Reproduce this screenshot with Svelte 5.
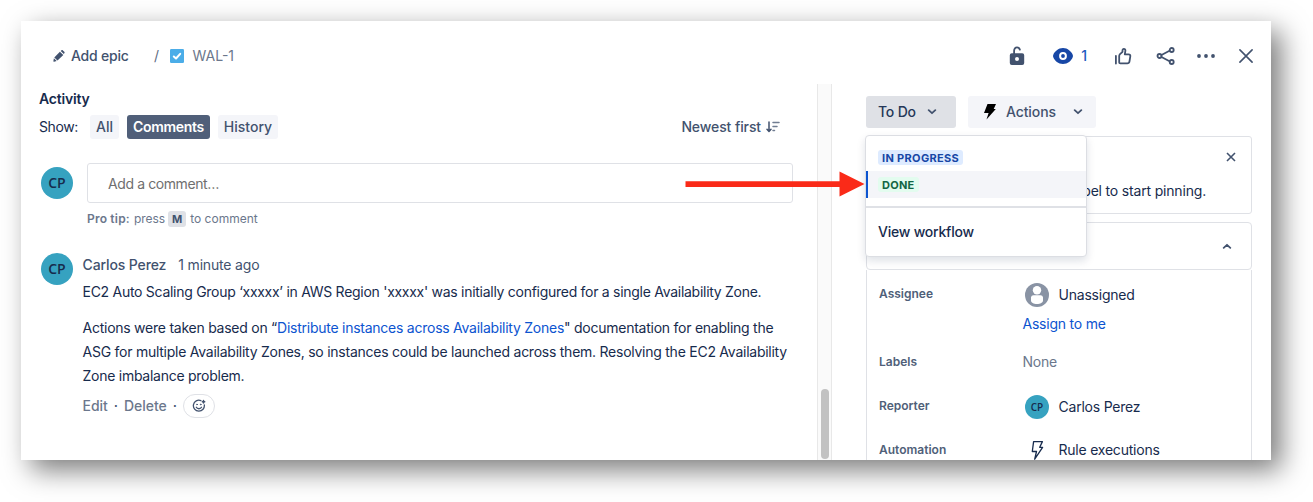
<script>
  const filters = [
    { label: 'All', active: false },
    { label: 'Comments', active: true },
    { label: 'History', active: false }
  ];
</script>

{#snippet chevron(up)}
  <svg class="chev" class:up width="10" height="6" viewBox="0 0 10 6"><path d="M1.7 1.2 5 4.2 8.3 1.2" /></svg>
{/snippet}

<div class="stage">
  <main class="card">
    <header>
      <svg class="pencil" width="12" height="12" viewBox="0 0 12 12"><path d="M6.900 1.700 10.300 5 4.500 10.500 1.300 7.400ZM7.700.9l.8-.6c.5-.4 1-.3 1.400.1l1.400 1.300c.4.4.4 1 0 1.500l-.5.9ZM.9 8.200l2.800 2.700-2.600.8c-.5.1-.9-.2-.7-.7Z" /></svg>
      <span class="epic">Add epic</span>
      <span class="slash">/</span>
      <svg class="task" width="14" height="14" viewBox="0 0 14 14"><rect width="14" height="14" rx="1.200" fill="#4bade8" /><path d="M3.8 7.5 6 9.5 10.2 4.8" fill="none" stroke="#fff" stroke-width="2" stroke-linecap="round" stroke-linejoin="round" /></svg>
      <span class="key">WAL-1</span>
      <nav>
        <svg width="24" height="24" viewBox="0 0 24 24"><path d="M9.1 12V6.8C9.1 4.900 10.300 3.300 12 3.300c1.400 0 2.500.9 2.900 2.400" fill="none" stroke="#42526e" stroke-width="1.800" stroke-linecap="round" /><path fill="#42526e" fill-rule="evenodd" d="M6.8 9.2h10.4a2 2 0 0 1 2 2V19a2 2 0 0 1-2 2H6.8a2 2 0 0 1-2-2v-7.8a2 2 0 0 1 2-2ZM12 13.1a2 2 0 1 0 0 4 2 2 0 0 0 0-4Z" /></svg>
        <span class="watch">
          <svg width="20" height="16" viewBox="0 0 20 16"><path fill="#1747a6" d="M10 0C5.2 0 1.7 3.500.4 6.500Q-.3 8 .4 9.500C1.700 12.500 5.200 16 10 16s8.300-3.500 9.600-6.500q.7-1.500 0-3C18.300 3.500 14.800 0 10 0Z" /><circle cx="10" cy="8" r="2.9" fill="none" stroke="#fff" stroke-width="2" /></svg>
          <span>1</span>
        </span>
        <svg class="line" width="24" height="24" viewBox="0 0 24 24"><path d="M4.900 11.800v7.700M8.200 18.500v-6.500c0-.8.300-1.300.8-1.800l2.500-2.400V6.600c0-1.100.6-1.700 1.400-1.700s1.500.7 1.500 1.700l-.6 3.700h3.800c1.200 0 1.900.9 1.700 2l-.8 5.100c-.2 1.200-1 2-2.200 2H9.300c-.7 0-1.100-.3-1.100-.9Z" /></svg>
        <svg class="line share" width="24" height="24" viewBox="0 0 24 24"><path d="m7.500 11 8-4.200M7.500 13l8 4.200" /><circle cx="5.500" cy="12" r="2" /><circle cx="17.700" cy="6" r="2" /><circle cx="17.700" cy="18" r="2" /></svg>
        <svg class="dots" width="24" height="24" viewBox="0 0 24 24" fill="#42526e"><circle cx="5" cy="12" r="1.900" /><circle cx="12" cy="12" r="1.900" /><circle cx="19" cy="12" r="1.900" /></svg>
        <svg class="line close" width="24" height="24" viewBox="0 0 24 24"><path d="m5.900 5.900 12.200 12.200M18.100 5.900 5.900 18.100" /></svg>
      </nav>
    </header>

    <div class="columns">
      <section class="activity">
        <h2>Activity</h2>
        <div class="show">
          <span class="show-label">Show:</span>
          {#each filters as f}
            <button class="filter {f.label.toLowerCase()}" class:active={f.active}>{f.label}</button>
          {/each}
          <span class="sort">Newest first</span>
          <svg width="14" height="12" viewBox="0 0 14 12" fill="none" stroke="#42526e" stroke-linecap="round" stroke-linejoin="round"><path d="M3 1v9M1 8.300 3 10.500 5 8.300" stroke-width="1.500" /><path d="M7 1.500h6M7 5.500h4M7 9.500h1.500" stroke-width="1.500" stroke-opacity=".75" /></svg>
        </div>
        <div class="composer">
          <span class="avatar">CP</span>
          <div class="field">Add a comment…</div>
        </div>
        <p class="tip"><b>Pro tip:</b><span class="press">press</span><kbd>M</kbd><span>to comment</span></p>
        <article>
          <span class="avatar">CP</span>
          <div class="comment">
            <div class="byline"><span class="author">Carlos Perez</span><span class="time">1 minute ago</span></div>
            <p class="l1">EC2 Auto Scaling Group ‘xxxxx’ in AWS Region 'xxxxx' was initially configured for a single Availability Zone.</p>
            <p class="l2"><span class="a">Actions were taken based on “<a href="#doc">Distribute instances across Availability Zones</a>" documentation for enabling the</span><br /><span class="b">ASG for multiple Availability Zones, so instances could be launched across them. Resolving the EC2 Availability</span><br /><span class="c">Zone imbalance problem.</span></p>
            <div class="ops">
              <span class="edit">Edit</span><i>·</i><span class="delete">Delete</span><i>·</i>
              <span class="react"><svg width="14" height="14" viewBox="0 0 14 14" fill="none" stroke="#42526e" stroke-width="1.300" stroke-linecap="round"><path d="M8.900 1.600A5.500 5.500 0 1 0 12.300 5.800M4.300 8.300c1 1.900 4.200 1.900 5.200 0" /><circle cx="5" cy="5.500" r=".45" fill="#42526e" stroke-width=".7" /><circle cx="8.700" cy="5.500" r=".45" fill="#42526e" stroke-width=".7" /><path d="M11.500 1.600v2.400M10.300 2.800h2.400" stroke-width="1.500" /></svg></span>
            </div>
          </div>
        </article>
      </section>

      <div class="track"><div class="thumb"></div></div>

      <aside>
        <div class="buttons">
          <button class="status"><span>To Do</span>{@render chevron(false)}</button>
          <button class="actions"><svg width="14" height="16" viewBox="0 0 14 16"><path d="M4.500 0H13l-2.300 5.100h2.100L3.500 15.500 5.600 9H1Z" /></svg><span>Actions</span>{@render chevron(false)}</button>
          <div class="menu">
            <div class="item first"><span class="lozenge blue">IN PROGRESS</span></div>
            <div class="item selected"><span class="lozenge green">DONE</span></div>
            <div class="view"><span>View workflow</span></div>
            <svg class="arrow" width="180" height="26" viewBox="0 0 180 26" fill="#fa2a18"><path d="M.5 10.300h154V0.500L179.500 13 154.500 25.500v-9.500H.5Z" /></svg>
          </div>
        </div>
        <div class="pin">
          <svg width="10" height="10" viewBox="0 0 10 10"><path d="m1 1 8 8M9 1 1 9" /></svg>
          <span>bel to start pinning.</span>
        </div>
        <div class="section">{@render chevron(true)}</div>
        <dl>
          <dt class="assignee">Assignee</dt>
          <dd><svg class="person" width="24" height="24" viewBox="0 0 24 24"><circle cx="12" cy="12" r="12" fill="#8993a4" /><circle cx="12" cy="7.300" r="4.200" fill="#fff" /><path d="M6 14.300a2.500 2.500 0 0 1 2.500-2.100h7a2.500 2.500 0 0 1 2.500 2.100v3.200c0 2-2.700 3.500-6 3.500s-6-1.500-6-3.500Z" fill="#fff" /></svg><span class="unassigned">Unassigned</span></dd>
          <dt></dt><dd><a class="assign" href="#me">Assign to me</a></dd>
          <dt class="labels">Labels</dt><dd><span class="none">None</span></dd>
          <dt class="rep">Reporter</dt><dd><span class="avatar small">CP</span><span class="reporter">Carlos Perez</span></dd>
          <dt class="auto">Automation</dt><dd><svg class="rule" width="24" height="24" viewBox="0 0 24 24"><path d="M8.600 3.600h8.800l-2.700 5.700h2.900L9.700 21.200l1.800-7.700H7.300Z" /></svg><span class="rules">Rule executions</span></dd>
        </dl>
      </aside>
    </div>
  </main>
</div>

<style>
  :global(body) { margin: 0; background: #fff; overflow: hidden; }
  * { box-sizing: border-box; }
  .stage { width: 1313px; height: 502px; padding: 21px; overflow: hidden; font: 14px/20px Inter, sans-serif; color: #172b4d; background: #fff; }
  .card { width: 1250px; height: 439px; background: #fff; box-shadow: 10px 10px 26px rgba(0, 0, 0, .52); }
  svg { display: block; flex: none; }
  span { white-space: nowrap; }
  button { border: 0; margin: 0; font: inherit; font-weight: 500; color: #42526e; background: #f4f5f9; border-radius: 3px; display: flex; align-items: center; }
  p, h2, dl, dd { margin: 0; }
  a { color: #0c54d0; text-decoration: none; }

  header { height: 63px; padding: 7px 13px 0 32px; display: flex; align-items: center; }
  .pencil { fill: #42526e; }
  .epic { width: 60px; margin-left: 6px; font-weight: 500; letter-spacing: -.2px; color: #42526e; }
  .slash { margin-left: 23px; width: 16px; color: #5e6c84; }
  .key { margin-left: 8.5px; color: #6b778c; }
  nav { margin-left: auto; display: flex; align-items: center; }
  nav > svg { margin-left: 17px; }
  .watch { display: flex; align-items: center; gap: 8px; margin: 0 7px 0 24px; color: #1f5cc0; font-weight: 500; }
  .line { fill: none; stroke: #42526e; stroke-width: 1.8; stroke-linejoin: round; stroke-linecap: round; }
  nav > .share { margin-left: 19px; }
  nav > .dots { margin-left: 16px; }
  nav > .close { margin-left: 16px; stroke-width: 1.6; }

  .columns { height: 376px; display: flex; overflow: hidden; }
  .activity { width: 796px; padding: 5px 24px 0 18px; flex: none; }
  h2 { font-size: 14px; font-weight: 600; line-height: 20px; letter-spacing: -.18px; }
  .show { height: 24px; margin-top: 6px; display: flex; align-items: center; }
  .show-label { width: 51px; letter-spacing: -.4px; }
  .filter { height: 24px; padding: 0; justify-content: center; margin-right: 8px; }
  .all { width: 29px; }
  .comments { width: 83px; }
  .history { width: 60px; }
  .filter.active { background: #505f79; color: #fff; font-weight: 600; letter-spacing: -.3px; }
  .sort { margin: 0 5px 0 auto; font-weight: 500; letter-spacing: -.1px; color: #42526e; }
  .show > svg { margin-right: 13px; }
  .composer { margin: 24px 0 0 2px; display: flex; align-items: center; }
  .avatar { width: 32px; height: 32px; border-radius: 50%; background: #36a2c0; color: #172b4d; font: 600 14px/32px "Open Sans", sans-serif; text-align: center; flex: none; }
  .small { width: 24px; height: 24px; font-size: 10px; line-height: 24px; }
  .field { width: 706px; height: 40px; margin-left: 14px; padding: 0 20px; border: 1px solid #dfe1e6; border-radius: 3px; line-height: 40px; letter-spacing: -.4px; color: #6f6f6f; flex: none; }
  .tip { margin: 7px 0 0 48px; height: 18px; display: flex; align-items: center; font-size: 12px; color: #6b778c; }
  .tip b { font-weight: 600; letter-spacing: .2px; }
  .press { margin: 0 3px 0 4px; }
  kbd { width: 18px; height: 16px; margin-right: 4px; border-radius: 3px; background: #dfe1e6; color: #42526e; font: 700 11px/16px Inter, sans-serif; text-align: center; }
  article { margin: 25px 0 0 2px; display: flex; }
  .comment { margin-left: 9.5px; line-height: 24px; }
  .byline { display: flex; height: 24px; }
  .author { font-weight: 500; color: #42526e; letter-spacing: -.12px; }
  .time { margin-left: 12px; color: #42526e; letter-spacing: -.17px; }
  .comment p { white-space: nowrap; }
  .comment .l1 { margin: 3px 0 12px; letter-spacing: -.278px; }
  .a { letter-spacing: -.25px; }
  .b { letter-spacing: -.25px; }
  .c { letter-spacing: -.26px; }
  .ops { display: flex; align-items: center; height: 24px; margin-top: 6px; color: #6b778c; font-weight: 500; }
  .ops i { width: 16px; text-align: center; font-style: normal; color: #42526e; }
  .react { width: 32px; height: 24px; border: 1px solid #dfe1e6; border-radius: 12px; display: flex; align-items: center; justify-content: center; }

  .track { width: 15px; flex: none; padding: 305px 2px 0 3px; background: #fafafa; border: solid #e8e8e8; border-width: 0 1px; }
  .thumb { width: 8px; height: 70px; border-radius: 4px; background: #c2c2c2; }

  aside { flex: 1; padding: 12px 19px 0 34px; }
  .buttons { position: relative; height: 32px; display: flex; gap: 12px; }
  .buttons button { height: 32px; padding: 0 0 0 12px; }
  .buttons .status { width: 90px; background: #dfe1e6; color: #253858; }
  .status span { width: 39px; margin-right: 10px; text-align: left; letter-spacing: -.2px; }
  .buttons .actions { width: 128px; padding-left: 15px; }
  .actions span { width: 50px; margin: 0 17px 0 9px; text-align: left; letter-spacing: -.1px; }
  .chev { fill: none; stroke: #42526e; stroke-width: 1.8; stroke-linecap: round; stroke-linejoin: round; }
  .up { transform: rotate(180deg); }
  .menu { position: absolute; left: -1px; top: 39px; width: 222px; height: 122px; padding-top: 8px; border: 1px solid #dcdee3; border-radius: 4px; background: #fff; box-shadow: 0 4px 8px rgba(9, 30, 66, .13); z-index: 2; }
  .item { height: 27px; padding: 6px 12px 0; }
  .selected { background: #f4f5f9; border-left: 2px solid #0c54d0; padding-left: 10px; }
  .lozenge { display: block; width: max-content; height: 15px; padding: 0 4px; border-radius: 3px; font: 700 11px/16px Inter, sans-serif; }
  .blue { background: #deebff; color: #1747a6; letter-spacing: .33px; }
  .green { background: #e3fcef; color: #126644; letter-spacing: .25px; }
  .view { margin-top: 8px; padding: 14px 12px; border-top: 2px solid #dfe1e6; font-weight: 500; letter-spacing: -.22px; }
  .arrow { position: absolute; left: -181px; top: 35px; }
  .pin { height: 78px; margin-top: 8px; padding: 15px 15px 0 0; border: 1px solid #dfe1e6; border-radius: 3px; display: flex; flex-direction: column; align-items: flex-end; gap: 19px; }
  .pin svg { fill: none; stroke: #42526e; stroke-width: 1.6; }
  .pin span { margin-right: 30px; letter-spacing: -.18px; }
  .section { height: 48px; margin-top: 8px; padding-right: 19px; border: 1px solid #dfe1e6; border-radius: 4px; display: flex; align-items: center; justify-content: flex-end; }
  dl { height: 300px; padding: 10px 0 0 12px; border: solid #dfe1e6; border-width: 0 1px; display: grid; grid-template-columns: 144px 1fr; grid-template-rows: 30px 28px 54px 43px 46px; align-content: start; }
  dt { padding-top: 4px; font-size: 12px; line-height: 20px; font-weight: 600; color: #505f79; }
  dd { display: flex; align-items: flex-start; letter-spacing: -.22px; }
  dd > svg, .small { margin: 3px 9.5px 0 2px; letter-spacing: 0; }
  dd > span:last-child { margin-top: 5px; }
  .assign { margin-top: 4px; margin-left: -.5px; }
  .rule { fill: none; stroke: #172b4d; stroke-width: 1.3; stroke-linejoin: round; }
  dd > .none:last-child { color: #6b778c; margin: 14px 0 0 -.5px; }
  .labels { padding-top: 14px; }
  .auto { padding-top: 5px; }
</style>
